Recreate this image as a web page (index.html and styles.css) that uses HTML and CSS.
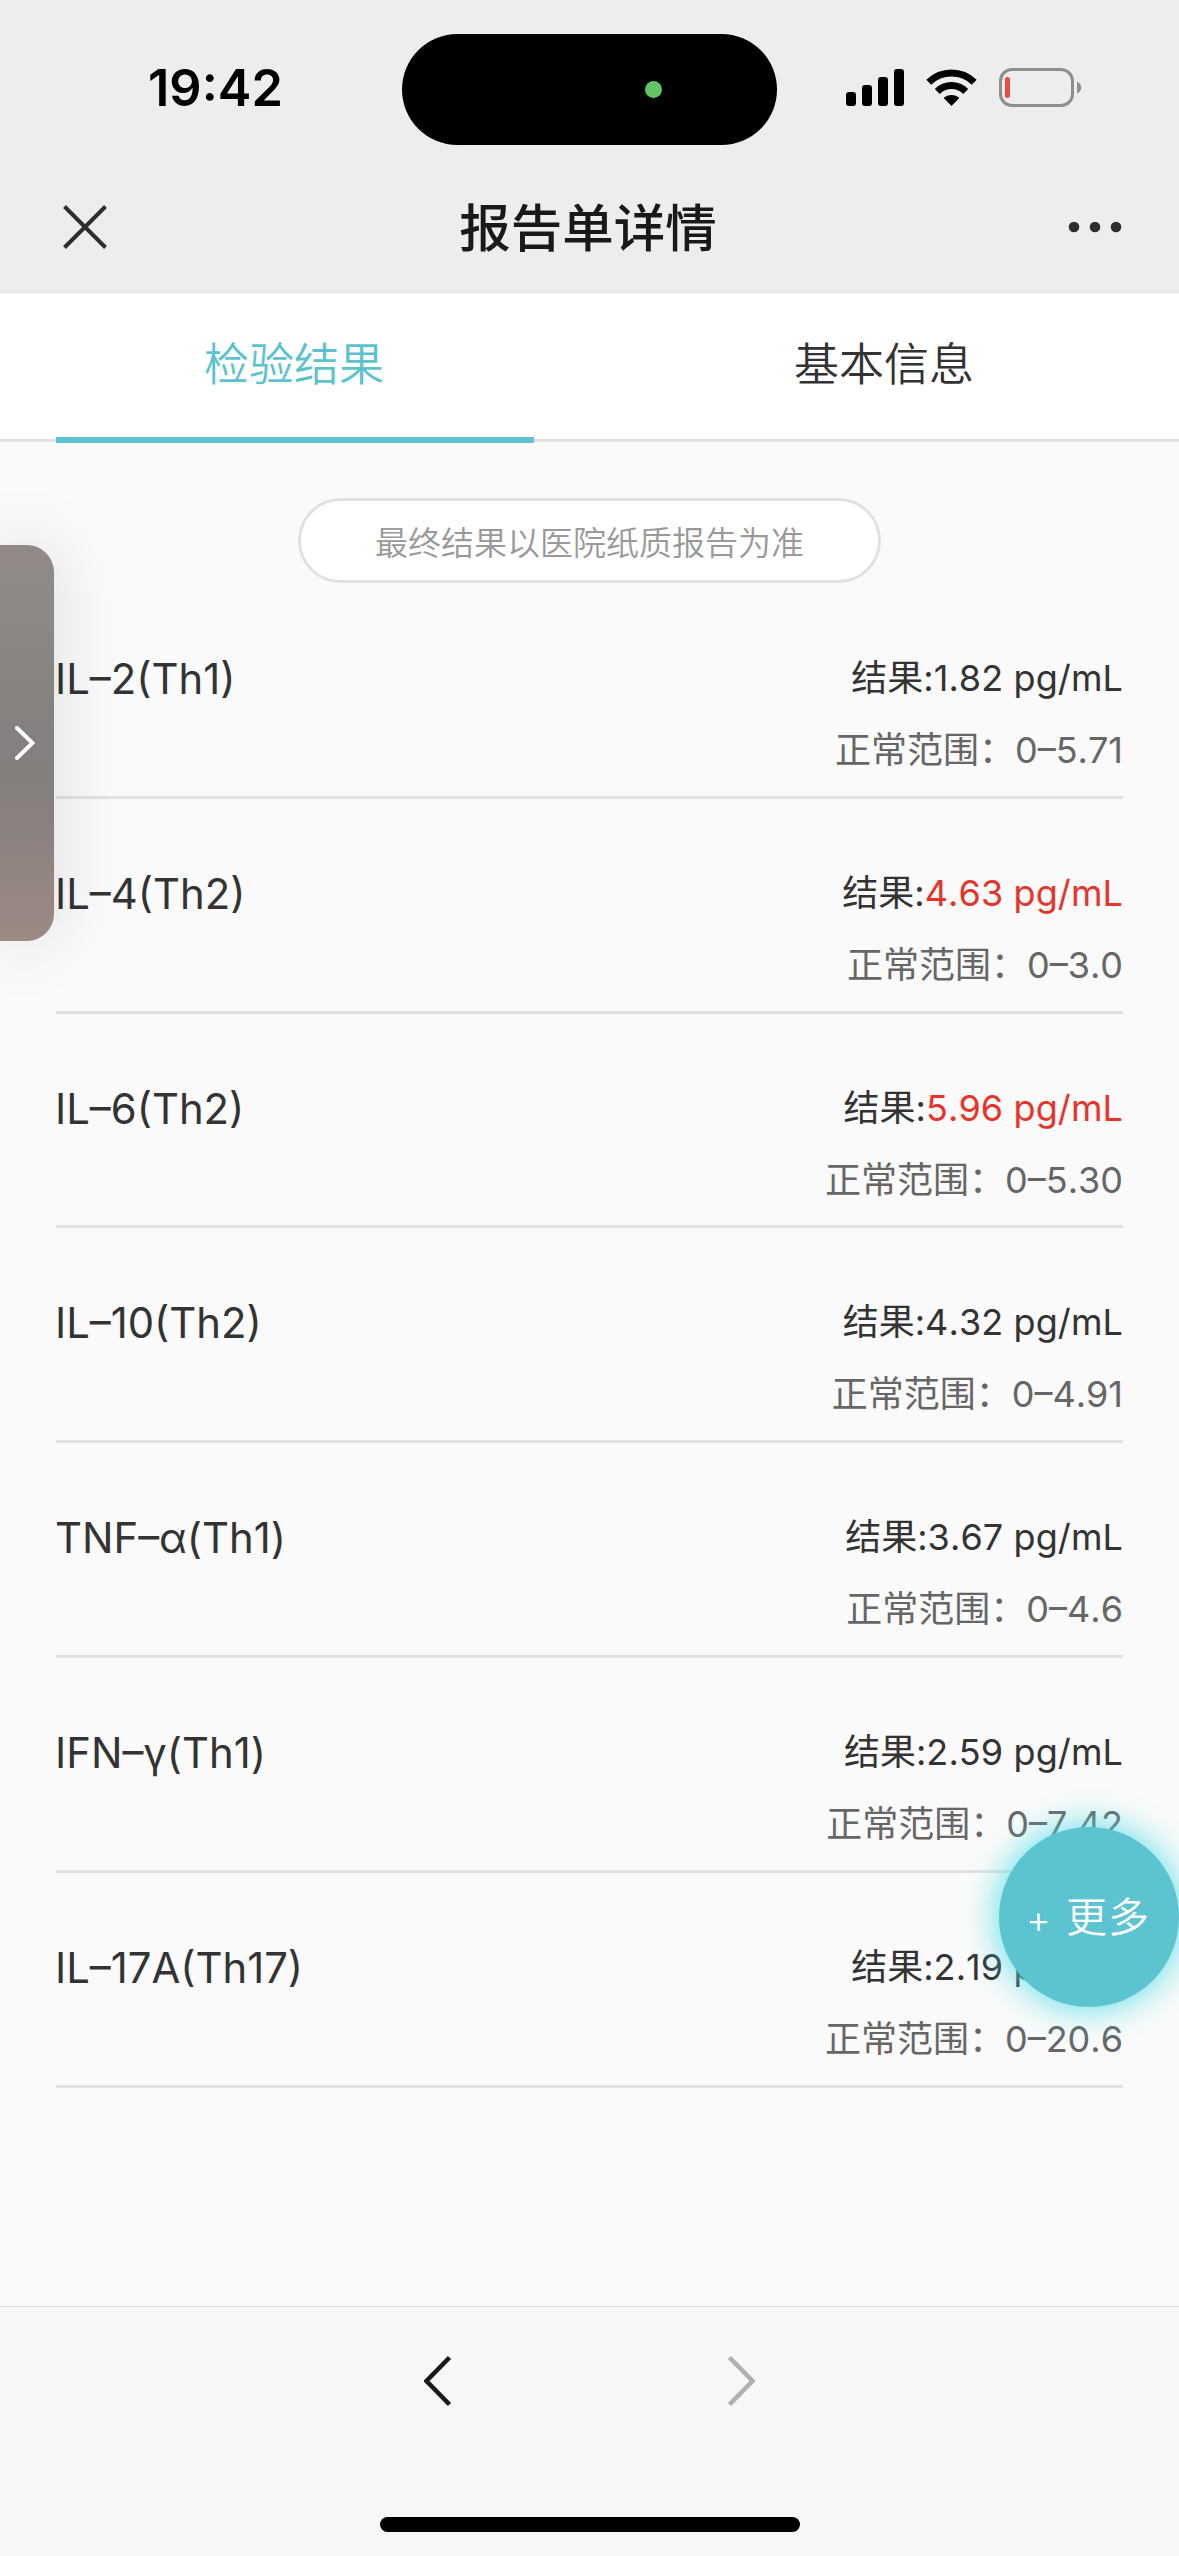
FILE: index.html
```
<!DOCTYPE html>
<html lang="zh-CN">
<head>
    <meta charset="UTF-8">
    <meta name="viewport" content="width=device-width, initial-scale=1.0">
    <title>报告单详情</title>
    <link rel="stylesheet" href="styles.css">
</head>
<body>

    <header class="header">
        <div class="status-bar">
            <span class="time">19:42</span>
            <div class="island"><span class="island-dot"></span></div>
            <div class="status-icons">
                <svg class="signal" width="58" height="37" viewBox="0 0 58 37">
                    <rect x="0" y="23" width="10" height="14" rx="3"/>
                    <rect x="16" y="16" width="10" height="21" rx="3"/>
                    <rect x="32" y="8" width="10" height="29" rx="3"/>
                    <rect x="48" y="0" width="10" height="37" rx="3"/>
                </svg>
                <svg class="wifi" width="51" height="37" viewBox="0 0 51 37">
                    <path d="M2.8 13.2A32.5 32.5 0 0 1 48.2 13.2" fill="none" stroke="#000" stroke-width="7"/>
                    <path d="M11.3 22.4A20.2 20.2 0 0 1 39.7 22.4" fill="none" stroke="#000" stroke-width="7"/>
                    <path d="M25.5 37L18.2 29.6Q17.6 28.8 18.4 28.2Q25.5 23.6 32.6 28.2Q33.4 28.8 32.8 29.6Z"/>
                </svg>
                <svg class="battery" width="83" height="39" viewBox="0 0 83 39">
                    <rect x="1.5" y="1.5" width="72" height="36" rx="11.5" fill="none" stroke="#8e8e8e" stroke-width="3"/>
                    <rect x="6" y="9" width="5" height="21" rx="2.2" fill="#ec4b42"/>
                    <path d="M78 13.5Q82.2 15.5 82.2 19.5T78 25.5Z" fill="#8e8e8e"/>
                </svg>
            </div>
        </div>
        <div class="nav-bar">
            <svg class="close" width="46" height="46" viewBox="0 0 46 46">
                <path d="M2.5 2.5L43.5 43.5M43.5 2.5L2.5 43.5"/>
            </svg>
            <h1 class="title">报告单详情</h1>
            <svg class="more" width="54" height="12" viewBox="0 0 54 12">
                <circle cx="6" cy="6" r="5.3"/>
                <circle cx="27" cy="6" r="5.3"/>
                <circle cx="48" cy="6" r="5.3"/>
            </svg>
        </div>
    </header>

    <nav class="tabs">
        <a class="tab active">检验结果</a>
        <a class="tab">基本信息</a>
    </nav>

    <main class="content">
        <p class="tip">最终结果以医院纸质报告为准</p>

        <ul class="result-list">
            <li class="item">
                <span class="name">IL–2(Th1)</span>
                <div class="detail">
                    <p class="result">结果:<span>1.82 pg/mL</span></p>
                    <p class="range">正常范围：0–5.71</p>
                </div>
            </li>
            <li class="item">
                <span class="name">IL–4(Th2)</span>
                <div class="detail">
                    <p class="result">结果:<span class="high">4.63 pg/mL</span></p>
                    <p class="range">正常范围：0–3.0</p>
                </div>
            </li>
            <li class="item">
                <span class="name">IL–6(Th2)</span>
                <div class="detail">
                    <p class="result">结果:<span class="high">5.96 pg/mL</span></p>
                    <p class="range">正常范围：0–5.30</p>
                </div>
            </li>
            <li class="item">
                <span class="name">IL–10(Th2)</span>
                <div class="detail">
                    <p class="result">结果:<span>4.32 pg/mL</span></p>
                    <p class="range">正常范围：0–4.91</p>
                </div>
            </li>
            <li class="item">
                <span class="name">TNF–α(Th1)</span>
                <div class="detail">
                    <p class="result">结果:<span>3.67 pg/mL</span></p>
                    <p class="range">正常范围：0–4.6</p>
                </div>
            </li>
            <li class="item">
                <span class="name">IFN–γ(Th1)</span>
                <div class="detail">
                    <p class="result">结果:<span>2.59 pg/mL</span></p>
                    <p class="range">正常范围：0–7.42</p>
                </div>
            </li>
            <li class="item">
                <span class="name">IL–17A(Th17)</span>
                <div class="detail">
                    <p class="result">结果:<span>2.19 pg/mL</span></p>
                    <p class="range">正常范围：0–20.6</p>
                </div>
            </li>
        </ul>
    </main>

    <footer class="footer">
        <div class="toolbar">
            <svg width="28" height="52" viewBox="0 0 28 52">
                <path d="M25.5 2.5L2.5 26L25.5 49.5" stroke="#1a1a1a"/>
            </svg>
            <svg width="28" height="52" viewBox="0 0 28 52">
                <path d="M2.5 2.5L25.5 26L2.5 49.5" stroke="#b0b0b0"/>
            </svg>
        </div>
        <div class="home-bar"></div>
    </footer>

    <!-- floating window handle -->
    <div class="side-handle">
        <svg width="20" height="34" viewBox="0 0 20 34">
            <path d="M2 2L17.5 17L2 32"/>
        </svg>
    </div>

    <a class="more-btn"><span class="plus">+</span>更多</a>

</body>
</html>
```
FILE: styles.css
```
* {
    box-sizing: border-box;
    margin: 0;
    padding: 0;
}

body {
    position: relative;
    display: flex;
    flex-direction: column;
    width: 1179px;
    height: 2556px;
    overflow: hidden;
    background-color: #fafafa;
    color: #333;
    font-family: Inter, "Noto Sans CJK SC", sans-serif;
}

svg {
    display: block;
    flex: none;
}

/* header */
.header {
    height: 293px;
    background-color: #ededed;
    border-bottom: 1px solid #e4e4e4;
}

.status-bar {
    display: grid;
    grid-template-columns: 402px 375px 402px;
    padding-top: 33px;
    height: 144px;
}

.time {
    padding-left: 148px;
    line-height: 110px;
    font-size: 50.5px;
    font-weight: 600;
    color: #000;
}

.island {
    display: flex;
    align-items: center;
    justify-content: flex-end;
    height: 111px;
    margin-top: 1px;
    padding-right: 115px;
    border-radius: 56px;
    background-color: #000;
}

.island-dot {
    width: 17px;
    height: 17px;
    border-radius: 50%;
    background-color: #62c466;
}

.status-icons {
    display: flex;
    align-items: center;
    height: 109px;
    padding-left: 69px;
}

.wifi {
    margin-left: 22px;
}

.battery {
    margin-left: 22px;
}

.nav-bar {
    display: flex;
    align-items: center;
    justify-content: space-between;
    height: 148px;
    padding: 17px 57px 0 62px;
}

.close {
    stroke: #2e2e2e;
    stroke-width: 4;
}

.title {
    padding-bottom: 5px;
    font-size: 51.5px;
    font-weight: 500;
    color: #191919;
}

.more {
    fill: #2e2e2e;
}

/* tabs */
.tabs {
    display: flex;
    justify-content: space-between;
    height: 149px;
    padding: 0 56px;
    background-color: #fff;
    border-bottom: 3px solid #e1e1e1;
}

.tab {
    width: 478px;
    height: 150px;
    line-height: 144px;
    text-align: center;
    font-size: 45px;
    font-weight: 350;
}

.tab.active {
    padding-right: 2px;
    color: #5cc3ce;
    border-bottom: 6px solid #5cc3ce;
}

/* results */
.content {
    flex: 1;
    padding: 56px 56px 0;
}

.tip {
    width: 583px;
    height: 85px;
    margin: 0 auto 1px;
    border: 3px solid #e1e1e1;
    border-radius: 43px;
    background-color: #fff;
    line-height: 84px;
    text-align: center;
    font-size: 33px;
    font-weight: 350;
    color: #999;
}

.result-list {
    list-style: none;
}

.item {
    display: flex;
    justify-content: space-between;
    height: 214.8px;
    padding-top: 58px;
    border-bottom: 3px solid #e1e1e1;
    line-height: 72px;
    font-size: 36px;
    font-kerning: none;
}

.name {
    margin-left: -1px;
    padding-top: 1px;
    font-size: 41.8px;
    font-weight: 370;
}

.detail {
    text-align: right;
}

.result {
    font-weight: 370;
}

.result span {
    letter-spacing: 0.1px;
}

.high {
    color: #e8332a;
}

.range {
    font-weight: 370;
    color: #666;
}

/* bottom bar */
.footer {
    height: 250px;
    border-top: 1px solid #dcdcdc;
    background-color: #f7f7f7;
}

.toolbar {
    display: flex;
    justify-content: center;
    gap: 275px;
    padding-top: 48px;
    fill: none;
    stroke-width: 4.5;
}

.home-bar {
    width: 420px;
    height: 15px;
    margin: 110px auto 0;
    border-radius: 8px;
    background-color: #000;
}

/* overlays */
.side-handle {
    position: absolute;
    left: 0;
    top: 545px;
    display: flex;
    align-items: center;
    width: 54px;
    height: 396px;
    padding-left: 15px;
    border-radius: 0 27px 27px 0;
    background: linear-gradient(#928a86, #8b8883 20%, #84807f 48%, #847f7d 60%, #8d8280 75%, #9c8983);
    box-shadow: 0 0 70px rgba(0, 0, 0, 0.13);
    fill: none;
    stroke: #fff;
    stroke-width: 4;
    stroke-linecap: round;
}

.more-btn {
    position: absolute;
    right: 0;
    top: 1827px;
    display: flex;
    align-items: center;
    justify-content: center;
    width: 180px;
    height: 180px;
    padding-bottom: 6px;
    border-radius: 50%;
    background-color: #5cc3d0;
    box-shadow: 0 0 36px #4fdde6;
    font-size: 41px;
    font-weight: 350;
    letter-spacing: 1px;
    color: #fff;
}

.plus {
    margin: 10px 14px 0 -2px;
    font-size: 38px;
    font-weight: 300;
}
```
